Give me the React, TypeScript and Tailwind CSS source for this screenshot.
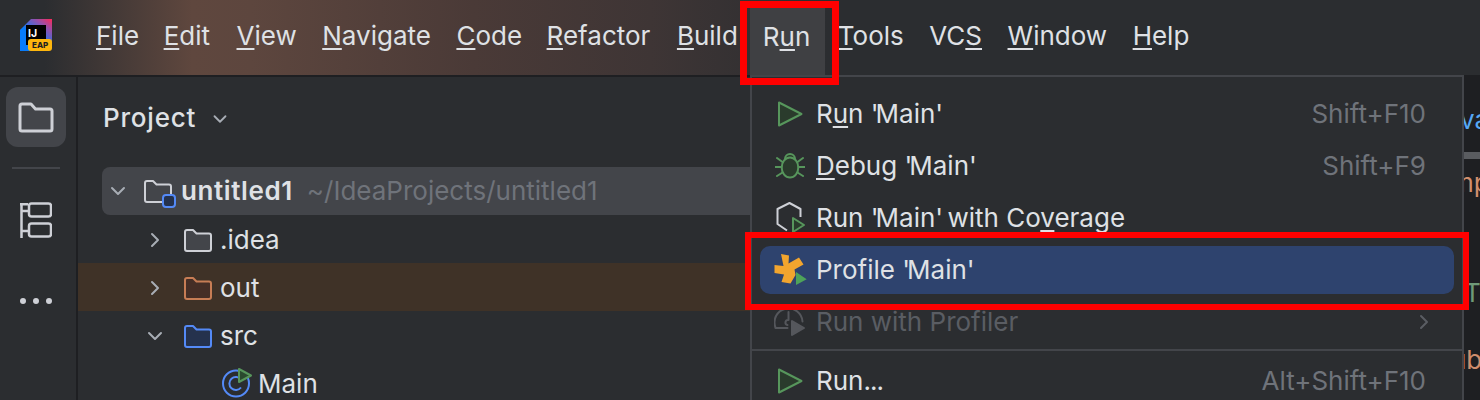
import type { ReactNode } from "react";
import { ChevronDown, ChevronRight } from "lucide-react";

const font = "font-['Inter','Liberation_Sans',sans-serif]";

function U({ children }: { children: ReactNode }) {
  return <span className="underline decoration-2 underline-offset-[3px] decoration-[#dfe1e5]">{children}</span>;
}

// the apostrophes sit tighter in the reference's Inter build
function Q() {
  return <span className="tracking-[-3px]">'</span>;
}

function Logo() {
  return (
    <svg width="32" height="32" viewBox="0 0 32 32">
      <defs>
        <linearGradient id="lg" x1="0" y1="1" x2="1" y2="0">
          <stop offset="0.35" stopColor="#087cfa" />
          <stop offset="0.75" stopColor="#9a4ea8" />
          <stop offset="1" stopColor="#fe2857" />
        </linearGradient>
      </defs>
      <path d="M11 0h21v24H0V11z" fill="url(#lg)" />
      <path d="M0 11v21h14V7z" fill="#087cfa" />
      <rect x="6" y="6" width="20" height="20" fill="#000" />
      <text x="8" y="17.500" fill="#fff" fontSize="10.500" fontWeight="700" fontFamily="Inter">IJ</text>
      <rect x="8" y="20" width="24" height="12" rx="3" fill="#fdb60d" />
      <text x="12" y="29" fill="#1e1f22" fontSize="8" fontWeight="800" fontFamily="Inter">EAP</text>
    </svg>
  );
}

function FolderIcon({ stroke, fill, size = 28 }: { stroke: string; fill: string; size?: number }) {
  return (
    <svg width={size} height={size} viewBox="0 0 28 28" fill={fill} stroke={stroke} strokeWidth="2">
      <path d="M1 6a2 2 0 0 1 2-2h6l3.5 3.5H25a2 2 0 0 1 2 2V23a2 2 0 0 1-2 2H3a2 2 0 0 1-2-2z" strokeLinejoin="round" />
    </svg>
  );
}

function PlayIcon() {
  return (
    <svg width="28" height="28" viewBox="0 0 28 28" fill="#2a3b2c" stroke="#57965c" strokeWidth="2" strokeLinejoin="round">
      <path d="M3 2.5v23L25.5 14z" />
    </svg>
  );
}

function BugIcon() {
  return (
    <svg width="30" height="28" viewBox="0 0 30 28" fill="none" stroke="#57965c" strokeWidth="2" strokeLinecap="round">
      <path d="M10 7a5 5 0 0 1 10 0" fill="#2a3b2c" />
      <ellipse cx="15" cy="15.500" rx="8.300" ry="10" fill="#2a3b2c" />
      <path d="M0 15h6.500M23.500 15h6.500M2 6l5.500 4M28 6l-5.500 4M2 24l5.500-3.500M28 24l-5.500-3.500" />
    </svg>
  );
}

function CoverageIcon() {
  return (
    <svg width="30" height="32" viewBox="0 0 30 32" fill="none">
      <path d="M25.500 15V7L14.500 1 2.500 7v15l9.500 6.500" stroke="#ced0d6" strokeWidth="2" strokeLinejoin="round" />
      <path d="M18 16v14l11-7z" fill="#2a3b2c" stroke="#57965c" strokeWidth="2" strokeLinejoin="round" />
    </svg>
  );
}

function ProfileIcon() {
  return (
    <svg width="33" height="32" viewBox="0 0 33 32">
      <path d="M7 0l8 1.500-.5 8L25 3.500l4.500 7-9 5 1 5.500-5 8.500-9-1.500 2.500-7.500-9.500-1.500V11l9 1z" fill="#f2a52e" />
      <path d="M22 18l10.700 7.300L22 31z" fill="#4ea35a" />
    </svg>
  );
}

function ProfilerIcon() {
  return (
    <svg className="mt-[2px]" width="32" height="30" viewBox="0 0 32 30" fill="none" stroke="#55575c" strokeWidth="2" strokeLinecap="round">
      <path d="M1.500 19.500a14 14 0 1 1 27-6" />
      <path d="M1.500 20h12M14.500 4v8M14.500 12a2.500 2.500 0 0 0-1 5" />
      <path d="M18 13v14l12-7z" fill="#55575c" strokeLinejoin="round" />
    </svg>
  );
}

function MenuRow({
  icon,
  label,
  shortcut,
  active,
  disabled,
  chevron,
}: {
  icon: ReactNode;
  label: ReactNode;
  shortcut?: string;
  active?: boolean;
  disabled?: boolean;
  chevron?: boolean;
}) {
  return (
    <div
      className={`mx-[8px] flex h-[48px] items-center rounded-[10px] pr-[28px] ${active ? "bg-[#2e436e]" : ""} ${
        disabled ? "text-[#5a5d63]" : "text-[#dfe1e5]"
      }`}
    >
      <div className="flex w-[56px] shrink-0 items-center justify-center pl-[4px]">{icon}</div>
      <span>{label}</span>
      <span className="ml-auto text-[#6f737a]">{shortcut}</span>
      {chevron && <ChevronRight size={24} strokeWidth={2} className="-mr-[10px] text-[#5a5d63]" />}
    </div>
  );
}

export default function App() {
  return (
    <div className={`relative flex h-[400px] w-[1480px] flex-col overflow-hidden bg-[#2b2d30] text-[26px] leading-[32px] text-[#dfe1e5] ${font}`}>
      {/* title bar */}
      <header className="flex h-[77px] shrink-0 border-b-[2px] border-[#1e1f22] bg-[linear-gradient(90deg,#2b2d30_3%,#5f473e_13%,#5d463e_17%,#4a3a37_32%,#3e3535_44%,#2b2d30_56%)]">
        <div className="ml-[20px] mt-[19px]">
          <Logo />
        </div>
        <nav className="ml-[44px] flex h-full items-center gap-[25.5px] pb-[4px]">
          <span><U>F</U>ile</span>
          <span className="-ml-[1px]"><U>E</U>dit</span>
          <span className="ml-[1px]"><U>V</U>iew</span>
          <span><U>N</U>avigate</span>
          <span><U>C</U>ode</span>
          <span className="-ml-[1px]"><U>R</U>efactor</span>
          <span className="ml-[1px]"><U>B</U>uild</span>
          <span className="-ml-[13.500px] -mr-[13px] mt-[11px] flex h-[68px] items-center bg-[#3f4043] pb-[9px] pl-[13px] pr-[15px]">R<U>u</U>n</span>
          <span><U>T</U>ools</span>
          <span>VC<U>S</U></span>
          <span><U>W</U>indow</span>
          <span><U>H</U>elp</span>
        </nav>
      </header>

      <div className="flex min-h-0 flex-1">
        {/* tool strip */}
        <aside className="flex w-[78px] shrink-0 flex-col items-center border-r-[2px] border-[#1e1f22] pr-[5px] pt-[10px]">
          <div className="flex h-[60px] w-[60px] items-center justify-center rounded-[12px] bg-[#43454a]">
            <svg width="36" height="32" viewBox="0 0 36 32" fill="none" stroke="#ced0d6" strokeWidth="3">
              <path d="M2 5a2 2 0 0 1 2-2h9l4.500 5H32a2 2 0 0 1 2 2v18a2 2 0 0 1-2 2H4a2 2 0 0 1-2-2z" strokeLinejoin="round" />
            </svg>
          </div>
          <div className="mt-[20px] h-[2px] w-[48px] bg-[#43454a]" />
          <svg className="mt-[33px]" width="32" height="36" viewBox="0 0 32 36" fill="none" stroke="#ced0d6" strokeWidth="2.500">
            <path d="M1.500 1v35M0 2.200h8M1.500 9h7M1.500 29h7" />
            <rect x="9" y="1.500" width="22" height="13" rx="2.500" />
            <rect x="9" y="21.500" width="22" height="13" rx="2.500" />
          </svg>
          <div className="mt-[60px] flex gap-[7px]">
            <span className="h-[6px] w-[6px] rounded-full bg-[#ced0d6]" />
            <span className="h-[6px] w-[6px] rounded-full bg-[#ced0d6]" />
            <span className="h-[6px] w-[6px] rounded-full bg-[#ced0d6]" />
          </div>
        </aside>

        {/* project panel */}
        <section className="min-w-0 flex-1">
          <div className="flex h-[90px] items-center pb-[8px] pl-[25px] font-medium">
            <span className="tracking-[0.8px]">Project</span>
            <ChevronDown size={22} strokeWidth={2} className="ml-[13px] mt-[2px] text-[#a8adb5]" />
          </div>
          <div className="ml-[24px] flex h-[48px] items-center rounded-l-[8px] bg-[#43454a] pl-[4px]">
            <ChevronDown size={24} strokeWidth={2} className="text-[#a8adb5]" />
            <div className="relative ml-[14px] h-[28px] w-[32px]">
              <FolderIcon stroke="#ced0d6" fill="none" />
              <span className="absolute bottom-[-3px] right-[0px] h-[14px] w-[14px] rounded-[4px] border-2 border-[#548af7] bg-[#25324d]" />
            </div>
            <span className="ml-[5px] font-semibold tracking-[0.6px]">untitled1</span>
            <span className="ml-[14px] whitespace-nowrap text-[#6f737a]">~/IdeaProjects/untitled1</span>
          </div>
          <div className="flex h-[48px] items-center pl-[65px] pt-[1px]">
            <ChevronRight size={24} strokeWidth={2} className="text-[#a8adb5]" />
            <div className="ml-[17px]"><FolderIcon stroke="#ced0d6" fill="#43454a" /></div>
            <span className="ml-[8px]">.idea</span>
          </div>
          <div className="flex h-[48px] items-center bg-[#3f3227] pl-[65px] pt-[1px]">
            <ChevronRight size={24} strokeWidth={2} className="text-[#a8adb5]" />
            <div className="ml-[17px]"><FolderIcon stroke="#c77d55" fill="#452e26" /></div>
            <span className="ml-[8px]">out</span>
          </div>
          <div className="flex h-[48px] items-center pl-[65px] pt-[1px]">
            <ChevronDown size={24} strokeWidth={2} className="text-[#a8adb5]" />
            <div className="ml-[17px]"><FolderIcon stroke="#548af7" fill="#25324d" /></div>
            <span className="ml-[8px]">src</span>
          </div>
          <div className="flex h-[48px] items-center pl-[143px] pt-[1px]">
            <svg width="32" height="32" viewBox="0 0 32 32" fill="none">
              <circle cx="15" cy="15.500" r="13" stroke="#548af7" strokeWidth="2" />
              <path d="M20 19.500a6.500 6.500 0 1 1 0-8" stroke="#548af7" strokeWidth="2" fill="none" />
              <path d="M18 1v13l12-6.500z" fill="#2a4a2e" stroke="#57965c" strokeWidth="2" strokeLinejoin="round" />
            </svg>
            <span className="ml-[5px]">Main</span>
          </div>
        </section>

        {/* bit of the editor that shows past the popup */}
        <div className="w-[16px] shrink-0 overflow-hidden bg-[#1e1f22] pt-[27px] whitespace-nowrap">
          <div className="-ml-[4px] text-[#56a8f5]">va</div>
          <div className="mt-[16px] h-[7px] bg-[#5a5c60]" />
          <div className="mt-[8px] -ml-[13px] text-[#cf8e6d]">mp</div>
          <div className="mt-[78px] text-[#6f9a78]">T</div>
          <div className="mt-[35px] -ml-[13px] text-[#cf8e6d]">ub</div>
        </div>
      </div>

      {/* Run menu popup */}
      <div className="absolute left-[750px] top-[75px] w-[714px] border-x-[2px] border-t-[2px] border-[#43454a] bg-[#2b2d30] pt-[13px]">
        <div className="flex flex-col gap-[4px]">
          <MenuRow icon={<PlayIcon />} label={<>R<U>u</U>n <Q />Main<Q /></>} shortcut="Shift+F10" />
          <MenuRow icon={<BugIcon />} label={<><U>D</U>ebug <Q />Main<Q /></>} shortcut="Shift+F9" />
          <MenuRow icon={<CoverageIcon />} label={<>Run <Q />Main<Q /> with Co<U>v</U>erage</>} />
          <MenuRow icon={<ProfileIcon />} label={<>Profile <Q />Main<Q /></>} active />
          <MenuRow icon={<ProfilerIcon />} label="Run with Profiler" disabled chevron />
        </div>
        <div className="mt-[3px] h-[2px] bg-[#43454a]" />
        <div className="mt-[6px]">
          <MenuRow icon={<PlayIcon />} label={<>Run<span className="tracking-[-1px]">...</span></>} shortcut="Alt+Shift+F10" />
        </div>
      </div>

      {/* red annotation boxes */}
      <div className="absolute left-[740px] top-[1px] h-[84px] w-[99px] border-[7px] border-[#ff0000]" />
      <div className="absolute left-[745px] top-[232px] h-[78px] w-[724px] border-[6px] border-[#ff0000]" />
    </div>
  );
}
